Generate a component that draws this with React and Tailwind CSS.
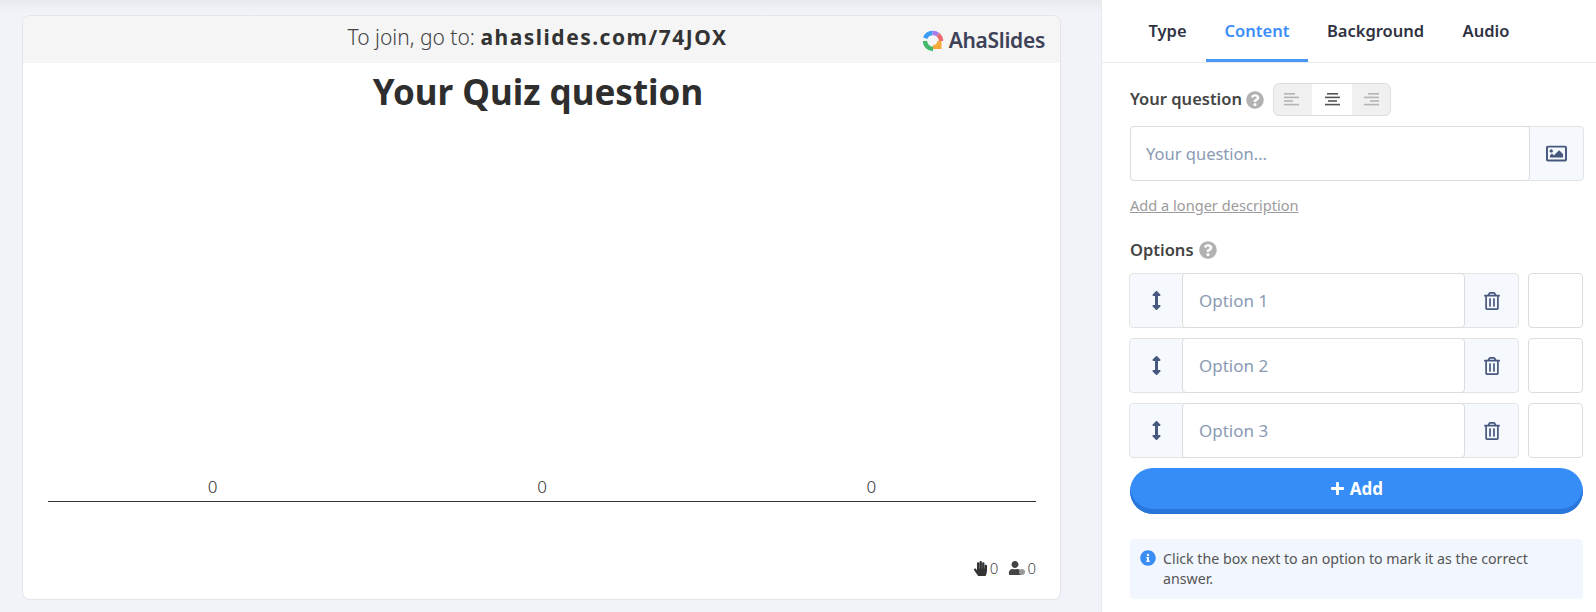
import React from "react";
import { FaHandPaper, FaUser, FaRegImage, FaRegTrashAlt, FaArrowsAltV, FaQuestionCircle, FaInfoCircle, FaPlus } from "react-icons/fa";

const font = { fontFamily: '"Noto Sans", sans-serif' };

function AlignIcon({ kind, color }) {
  const rows = kind === "left"
    ? [[0, 11], [0, 15], [0, 9], [0, 15]]
    : kind === "center"
    ? [[2, 11], [0, 15], [3, 9], [0, 15]]
    : [[4, 11], [0, 15], [6, 9], [0, 15]];
  return (
    <svg width="15" height="13" viewBox="0 0 15 13">
      {rows.map(([x, w], i) => (
        <rect key={i} x={x} y={i * 3.6} width={w} height="1.6" fill={color} />
      ))}
    </svg>
  );
}

function Logo() {
  return (
    <svg width="22" height="22" viewBox="0 0 22 22" fill="none">
      <path d="M3.2 8.2 A8 8 0 0 1 10.5 3" stroke="#3b9cf2" strokeWidth="4.4" />
      <path d="M10.5 3 A8 8 0 0 1 16 4.7" stroke="#a77bec" strokeWidth="4.4" />
      <path d="M16 4.7 A8 8 0 0 1 19 11" stroke="#ec6a6a" strokeWidth="4.4" />
      <path d="M3 11 A8 8 0 0 0 11 19" stroke="#43b868" strokeWidth="4.4" />
      <path d="M11 19 L19.5 19 L19.5 11 L15.3 11 C15.3 13.5 13.5 15 11 15 Z" fill="#f5a93b" />
    </svg>
  );
}

function Hint() {
  return <FaQuestionCircle className="text-[#b2b2b2] text-[18px]" />;
}

function OptionRow({ label }) {
  return (
    <div className="-ml-px flex gap-[9px] h-[55px]">
      <div className="flex w-[390px] rounded border border-[#e3e3e3] bg-[#f5f8fc]">
        <div className="w-[52px] flex items-center justify-center text-[#47587f] text-[19px]">
          <FaArrowsAltV />
        </div>
        <div className="flex-1 -my-px flex items-center rounded border border-[#dcdcdc] bg-white pl-4 text-[17px] text-[#8a9ab3]">
          {label}
        </div>
        <div className="w-[53px] flex items-center justify-center text-[#47587f] text-[18px]">
          <FaRegTrashAlt />
        </div>
      </div>
      <div className="w-[55px] rounded border border-[#dcdcdc] bg-white" />
    </div>
  );
}

export default function App() {
  return (
    <div className="relative flex h-[612px] w-[1596px] overflow-hidden bg-[#f2f3f9]" style={font}>
      <div className="absolute inset-x-0 top-0 h-3 bg-gradient-to-b from-[#e8e9ed] to-transparent" />

      <div className="flex-1 pt-[15px] pl-[22px] pr-[40px] pb-[12px]">
        <div className="h-full flex flex-col rounded-lg border border-[#e4e5ea] bg-white overflow-hidden">
          <div className="relative h-[47px] flex-none flex items-center justify-center pr-[8px] pb-[3px] bg-[#f5f5f6] text-[21px] text-[#444]">
            <span className="font-light">To join, go to:&nbsp;</span>
            <span className="font-bold tracking-[1.5px] text-[#333]">ahaslides.com/74JOX</span>
            <div className="absolute right-[15px] top-[9px] flex items-center gap-[5px]">
              <Logo />
              <span className="text-[21px] font-semibold text-[#3e4258] tracking-[-0.3px]">AhaSlides</span>
            </div>
          </div>
          <h1 className="mt-[4px] pr-[7px] text-center text-[35px] leading-[50px] font-bold text-[#2e2e2e]">Your Quiz question</h1>
          <div className="flex-1 ml-[25px] mr-[24px] flex flex-col justify-end">
            <div className="grid grid-cols-3 border-b border-[#333] pb-[2px] text-[17px] leading-[24px] font-light text-[#333] text-center">
              <span>0</span>
              <span>0</span>
              <span>0</span>
            </div>
          </div>
          <div className="h-[97px] flex-none flex items-end justify-end gap-[10px] pr-[24px] pb-[21px] text-[15px] leading-[20px] font-light text-[#444]">
            <span className="flex items-center gap-[2px]"><FaHandPaper className="text-[#333] text-[15px]" />0</span>
            <span className="flex items-center gap-[5px]">
              <span className="relative">
                <FaUser className="text-[#444] text-[14px]" />
                <span className="absolute -right-[3px] bottom-0 w-[6px] h-[6px] rounded-full bg-[#999]" />
              </span>
              0
            </span>
          </div>
        </div>
      </div>

      <div className="relative w-[495px] flex-none border-l border-[#e8e9ee] bg-white">
        <div className="flex h-[63px] pl-[27px] border-b border-[#eaeaec] text-[16.5px] font-semibold text-[#2f3242]">
          <div className="h-full w-[77px] pt-[1px] flex items-center justify-center">Type</div>
          <div className="h-full w-[102px] pt-[4px] flex items-center justify-center text-[#3a8dfa] border-b-[3px] border-[#4b97f5]">Content</div>
          <div className="h-full w-[135px] pt-[1px] flex items-center justify-center">Background</div>
          <div className="h-full w-[86px] pt-[1px] flex items-center justify-center">Audio</div>
        </div>

        <div className="pl-[28px] pr-[12px]">
          <div className="mt-[20px] h-[33px] flex items-center gap-[4px]">
            <span className="text-[16.5px] font-semibold text-[#444] pb-[1px]">Your question</span>
            <Hint />
            <div className="ml-[5px] flex h-[33px] w-[118px] rounded-md border border-[#dedede] bg-[#f0f0f0] overflow-hidden">
              <div className="w-[28px] ml-[10px] flex items-center"><AlignIcon kind="left" color="#b4b4b4" /></div>
              <div className="flex-1 flex items-center justify-center bg-white"><AlignIcon kind="center" color="#555" /></div>
              <div className="w-[38px] flex items-center justify-center"><AlignIcon kind="right" color="#b4b4b4" /></div>
            </div>
          </div>

          <div className="mt-[10px] flex h-[55px] w-[454px] rounded border border-[#e3e3e3] bg-[#f5f8fc]">
            <div className="flex-1 -my-px -ml-px flex items-center rounded border border-[#dcdcdc] bg-white pl-[15px] pt-[1px] text-[16.5px] text-[#8a9ab3]">
              Your question...
            </div>
            <div className="w-[53px] flex items-center justify-center text-[#47587f] text-[21px]">
              <FaRegImage />
            </div>
          </div>

          <div className="mt-[14px] text-[14.6px] leading-[20px] text-[#9b9b9b] underline">Add a longer description</div>

          <div className="mt-[23px] flex items-center gap-[5px] h-[24px]">
            <span className="text-[16.5px] font-semibold text-[#444]">Options</span>
            <Hint />
          </div>

          <div className="mt-[11px] flex flex-col gap-[10px]">
            <OptionRow label="Option 1" />
            <OptionRow label="Option 2" />
            <OptionRow label="Option 3" />
          </div>

          <button className="mt-[10px] w-[453px] h-[46px] rounded-[23px] bg-[#368df7] shadow-[inset_0_-5px_0_#2876d9] flex items-center justify-center gap-[5px] pb-[5px] text-white text-[17px] font-bold">
            <FaPlus className="text-[15px]" />
            Add
          </button>

          <div className="mt-[25px] w-[453px] h-[60px] rounded bg-[#f2f6fe] pl-[33px] pr-[10px] pt-[10px] relative text-[14.2px] leading-[20px] text-[#555]">
            <FaInfoCircle className="absolute left-[10px] top-[11px] text-[#3a8df5] text-[16px]" />
            Click the box next to an option to mark it as the correct answer.
          </div>
        </div>
      </div>
    </div>
  );
}
